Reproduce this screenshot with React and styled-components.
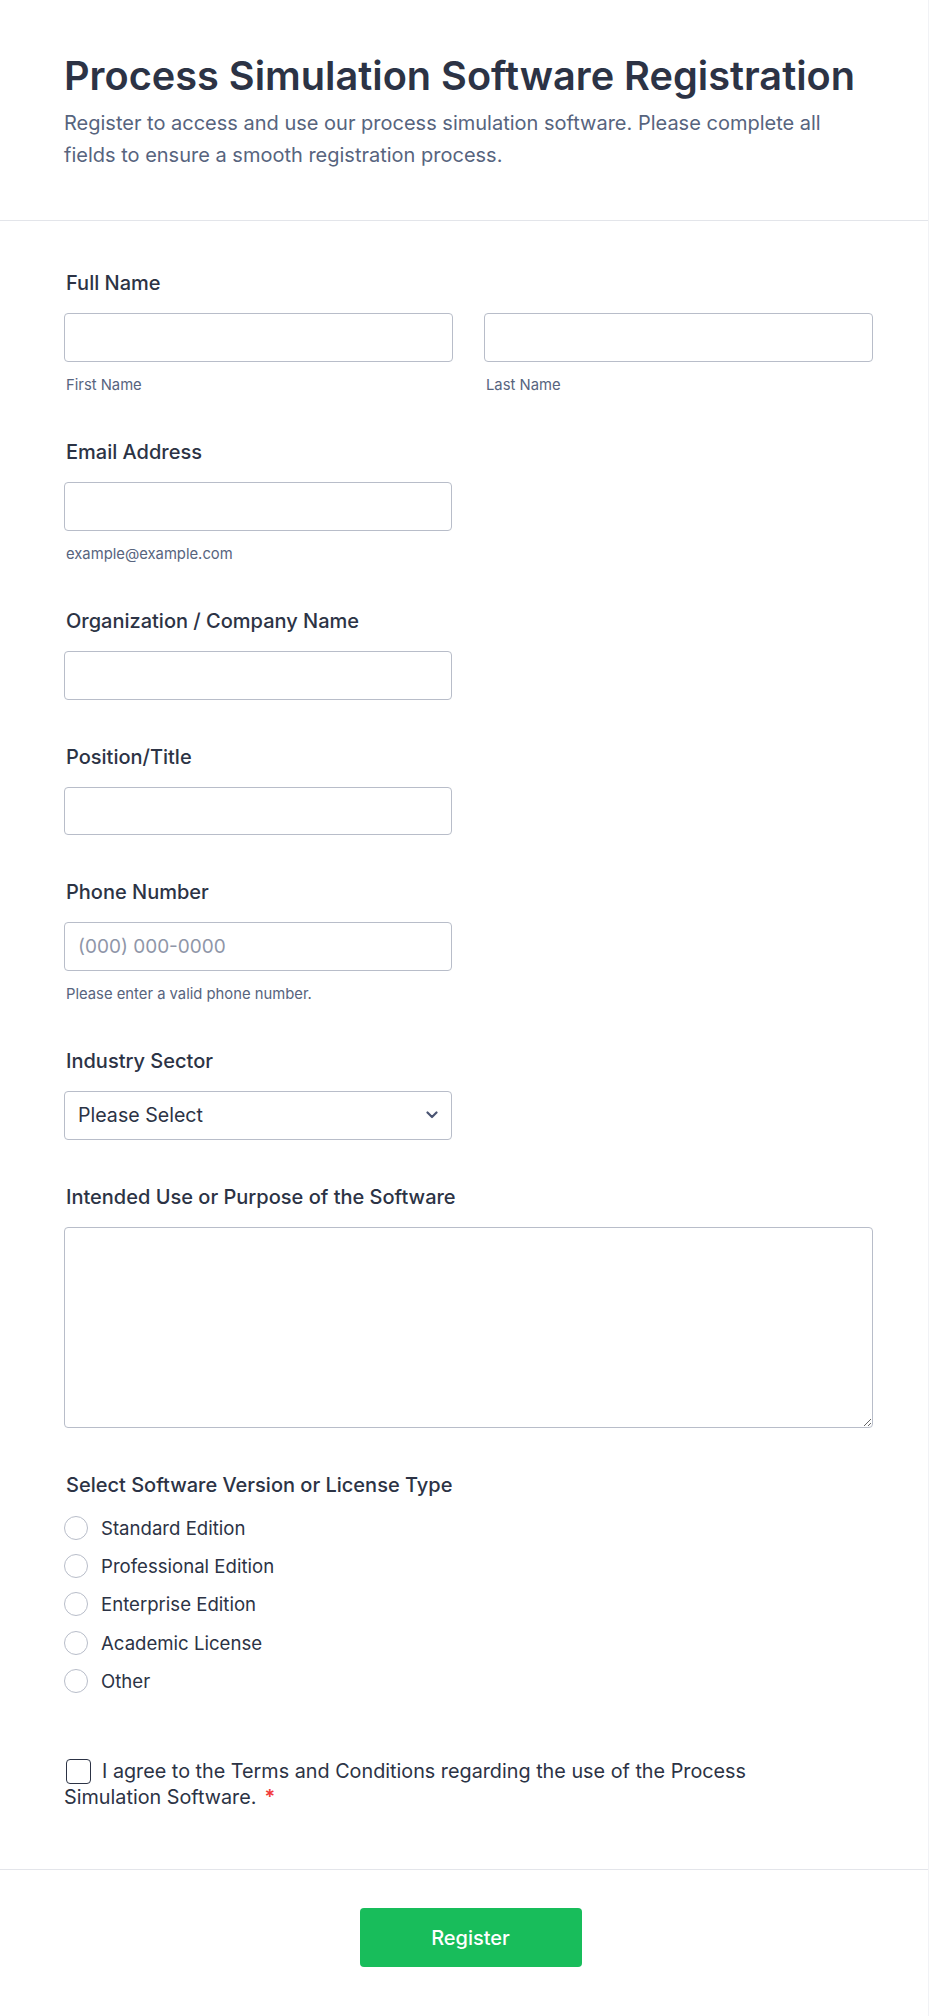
import React from 'react'
import styled, { createGlobalStyle } from 'styled-components'

const GlobalStyle = createGlobalStyle`
  * { box-sizing: border-box; }
  body {
    margin: 0;
    background: #fff;
    font-family: Inter, "Noto Sans", sans-serif;
    color: #2c3345;
  }
`

const Form = styled.form`
  width: 929px;
  min-height: 2016px;
  background: #fff;
  border-right: 1px solid #f1f2f5;
`

const Header = styled.header`
  padding: 52px 55px 49px 64px;
  border-bottom: 1px solid #e3e5ea;
`

const Title = styled.h1`
  margin: 0 0 7px;
  font-size: 39.7px;
  line-height: 48px;
  font-weight: 600;
  color: #2c3345;
`

const Subtitle = styled.p`
  margin: 0;
  font-size: 20px;
  line-height: 32px;
  color: #57647e;
  max-width: 800px;
`

const Body = styled.div`
  display: flex;
  flex-direction: column;
  gap: 45px;
  padding: 50px 55px 59px 64px;
`

const Field = styled.div`
  display: flex;
  flex-direction: column;
`

const Label = styled.label`
  font-size: 20px;
  line-height: 24px;
  font-weight: 500;
  color: #2c3345;
  margin: 0 0 ${p => (p.$tight ? '12px' : '18px')} 2px;
`

const Row = styled.div`
  display: grid;
  grid-template-columns: 1fr 1fr;
  column-gap: 31px;
`

const Col = styled.div`
  display: flex;
  flex-direction: column;
`

const Input = styled.input`
  width: ${p => (p.$half ? '388px' : '100%')};
  height: 48.5px;
  padding: 0 13px;
  border: 1px solid #b8bdc9;
  border-radius: 4px;
  background: #fff;
  font-family: inherit;
  font-size: 19px;
  color: #2c3345;
  outline: none;
  &::placeholder { color: #8f96a8; }
`

const Sub = styled.span`
  margin: 13.5px 0 0 2px;
  font-size: 14.8px;
  line-height: 20px;
  color: #57647e;
`

const SelectBox = styled.div`
  width: 388px;
  height: 48.5px;
  display: flex;
  align-items: center;
  justify-content: space-between;
  padding: 0 13px;
  border: 1px solid #b8bdc9;
  border-radius: 4px;
  font-size: 19.6px;
  color: #2c3345;
`

const TextArea = styled.textarea`
  width: 100%;
  height: 201px;
  padding: 12px 13px;
  border: 1px solid #b8bdc9;
  border-radius: 4px;
  font-family: inherit;
  font-size: 19px;
  color: #2c3345;
  resize: vertical;
  outline: none;
`

const Options = styled.div`
  display: flex;
  flex-direction: column;
`

const Option = styled.label`
  display: flex;
  align-items: center;
  gap: 13px;
  height: 38.4px;
  font-size: 18.6px;
  color: #2c3345;
`

const Radio = styled.span`
  width: 24px;
  height: 24px;
  border-radius: 50%;
  border: 1px solid #b8bdc9;
  background: #fff;
  flex-shrink: 0;
`

const Agree = styled.p`
  margin: 13px 0 0;
  font-size: 19.8px;
  line-height: 26px;
  color: #2c3345;
  max-width: 730px;
`

const Check = styled.span`
  display: inline-block;
  width: 25px;
  height: 25px;
  margin: 0 11px 0 2px;
  border: 1.5px solid #2c3345;
  border-radius: 4px;
  vertical-align: -6px;
`

const Req = styled.span`
  color: #f23a3c;
  margin-left: 8px;
  font-weight: 600;
`

const Footer = styled.div`
  display: flex;
  justify-content: center;
  padding: 38px 51px 50px 64px;
  border-top: 1px solid #e3e5ea;
`

const Button = styled.button`
  width: 222px;
  height: 59px;
  border: none;
  border-radius: 4px;
  background: #18bd5b;
  color: #fff;
  font-family: inherit;
  font-size: 20px;
  font-weight: 500;
  cursor: pointer;
`

const Chevron = () => (
  <svg width="12" height="8" viewBox="0 0 12 8" fill="none">
    <path d="M1.5 1.5L6 6l4.5-4.5" stroke="#4b5573" strokeWidth="2.2" strokeLinecap="round" strokeLinejoin="round" />
  </svg>
)

const licenses = ['Standard Edition', 'Professional Edition', 'Enterprise Edition', 'Academic License', 'Other']

export default function App() {
  return (
    <>
      <GlobalStyle />
      <Form onSubmit={e => e.preventDefault()}>
        <Header>
          <Title>Process Simulation Software Registration</Title>
          <Subtitle>
            Register to access and use our process simulation software. Please complete all fields to ensure a smooth registration process.
          </Subtitle>
        </Header>
        <Body>
          <Field>
            <Label>Full Name</Label>
            <Row>
              <Col>
                <Input />
                <Sub>First Name</Sub>
              </Col>
              <Col>
                <Input />
                <Sub>Last Name</Sub>
              </Col>
            </Row>
          </Field>
          <Field>
            <Label>Email Address</Label>
            <Input $half />
            <Sub>example@example.com</Sub>
          </Field>
          <Field>
            <Label>Organization / Company Name</Label>
            <Input $half />
          </Field>
          <Field>
            <Label>Position/Title</Label>
            <Input $half />
          </Field>
          <Field>
            <Label>Phone Number</Label>
            <Input $half placeholder="(000) 000-0000" />
            <Sub>Please enter a valid phone number.</Sub>
          </Field>
          <Field>
            <Label>Industry Sector</Label>
            <SelectBox>
              <span>Please Select</span>
              <Chevron />
            </SelectBox>
          </Field>
          <Field>
            <Label>Intended Use or Purpose of the Software</Label>
            <TextArea />
          </Field>
          <Field>
            <Label $tight>Select Software Version or License Type</Label>
            <Options>
              {licenses.map(l => (
                <Option key={l}>
                  <Radio />
                  {l}
                </Option>
              ))}
            </Options>
          </Field>
          <Agree>
            <Check />
            I agree to the Terms and Conditions regarding the use of the Process Simulation Software.
            <Req>*</Req>
          </Agree>
        </Body>
        <Footer>
          <Button type="submit">Register</Button>
        </Footer>
      </Form>
    </>
  )
}
